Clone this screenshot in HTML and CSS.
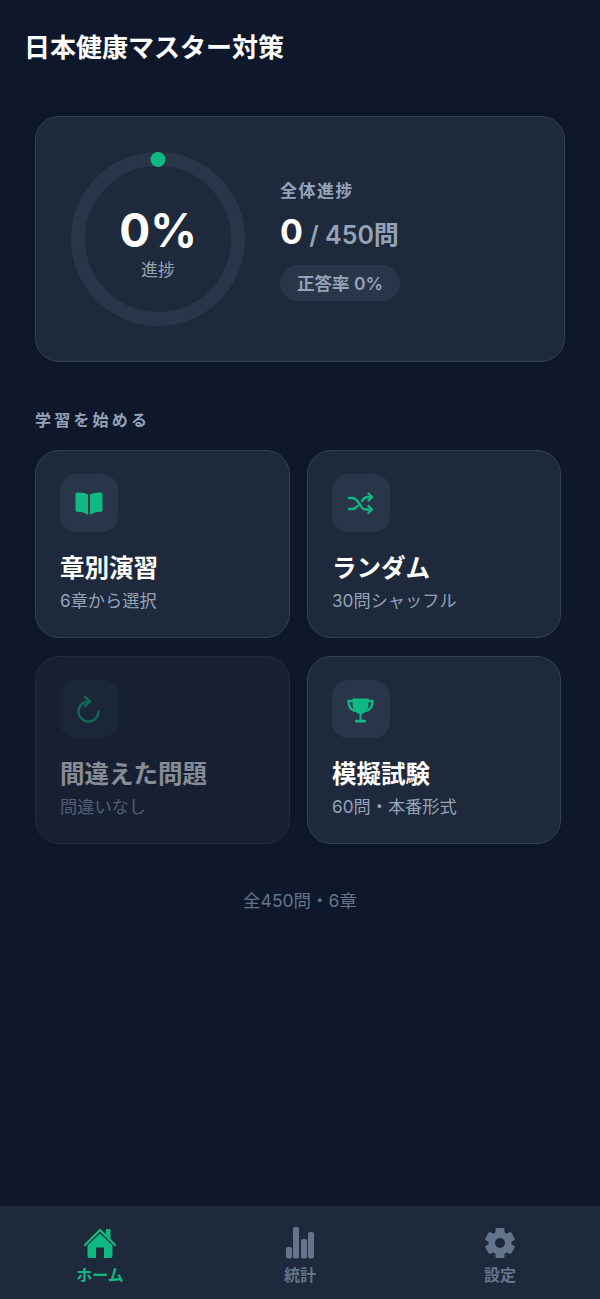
FILE: index.html
```html
<!DOCTYPE html>
<html lang="ja">
<head>
<meta charset="utf-8">
<title>日本健康マスター対策</title>
<link rel="stylesheet" href="styles.css">
</head>
<body>
<div class="app">
  <header class="header"><h1 class="app-title">日本健康マスター対策</h1></header>
  <main class="content">
    <section class="hero">
      <div class="ring">
        <svg class="ring-svg" viewBox="0 0 176 176" width="176" height="176">
          <circle class="ring-track" cx="88" cy="88" r="80"/>
          <circle class="ring-dot" cx="88" cy="8.500" r="7.500"/>
        </svg>
        <div class="ring-text">
          <div class="ring-value">0%</div>
          <div class="ring-label">進捗</div>
        </div>
      </div>
      <div class="stats">
        <div class="stats-label">全体進捗</div>
        <div class="stats-count"><span class="count-main">0</span><span class="count-sub"> / 450問</span></div>
        <div class="pill">正答率 0%</div>
      </div>
    </section>

    <h2 class="section-title">学習を始める</h2>
    <div class="grid">
      <article class="card">
        <div class="icon-box">
          <svg viewBox="0 0 32 32" width="32" height="32"><path class="fill-green" d="M15 7.600C12.500 5.900 8.600 5.200 4.200 5.500c-1 .1-1.700.8-1.700 1.800v15.600c0 1 .8 1.800 1.800 1.800 4 0 7.600 1 10.700 3.200z"/><path class="fill-green" d="M17 7.600c2.500-1.700 6.400-2.400 10.800-2.100 1 .1 1.700.8 1.700 1.800v15.600c0 1-.8 1.800-1.800 1.800-4 0-7.600 1-10.700 3.200z"/></svg>
        </div>
        <h3 class="card-title">章別演習</h3>
        <p class="card-sub">6章から選択</p>
      </article>
      <article class="card">
        <div class="icon-box">
          <svg viewBox="0 0 32 32" width="32" height="32"><path class="stroke-green" d="M4 11h3c3 0 4.500 1.500 6 4l2 3c1.500 2.500 3 4.500 6 4.500h5M4 22h3c2.500 0 4-1 5.500-3M17 14c1.500-2.500 3-4 6-4h4"/><path class="stroke-green" d="M23.500 6.500 27 10l-3.500 3.500M23.500 19l3.500 3.500-3.500 3.500"/></svg>
        </div>
        <h3 class="card-title">ランダム</h3>
        <p class="card-sub">30問シャッフル</p>
      </article>
      <article class="card card-disabled">
        <div class="icon-box">
          <svg viewBox="0 0 32 32" width="32" height="32"><path class="stroke-green" d="M16 8.500A10 10 0 1 0 25.500 18.500"/><path class="stroke-green" d="M12 4l5 4.500-5 4.500"/></svg>
        </div>
        <h3 class="card-title">間違えた問題</h3>
        <p class="card-sub">間違いなし</p>
      </article>
      <article class="card">
        <div class="icon-box">
          <svg viewBox="0 0 32 32" width="32" height="32"><path class="stroke-green" d="M8 8H3.500c0 5 2 8.500 6 10M23 8h4.500c0 5-2 8.500-6 10"/><path class="fill-green" d="M7.500 5.500h16v6c0 5-3.500 9-7 9.500v6h-2v-6c-3.500-.5-7-4.500-7-9.500z"/><rect class="fill-green" x="10" y="26.800" width="11" height="2.600" rx="1.200"/></svg>
        </div>
        <h3 class="card-title">模擬試験</h3>
        <p class="card-sub">60問・本番形式</p>
      </article>
    </div>
    <p class="summary">全450問・6章</p>
  </main>
  <nav class="tabbar">
    <div class="tab tab-active">
      <svg viewBox="0 0 36 34" width="36" height="34"><path class="fill-green" d="M18 7.500 5.500 19.500V30c0 1.100.9 2 2 2H14V21.500h8V32h6.500c1.100 0 2-.9 2-2V19.500z"/><path class="roof" d="M3 19 18 4l15 15"/><path class="fill-green" d="M24 3h4.500v10L24 8.500z"/></svg>
      <span class="tab-label">ホーム</span>
    </div>
    <div class="tab">
      <svg viewBox="0 0 36 34" width="36" height="34"><rect class="fill-grey" x="4" y="21" width="6" height="11.500" rx="2"/><rect class="fill-grey" x="11" y="1" width="6" height="31.500" rx="2"/><rect class="fill-grey" x="19" y="13" width="6" height="19.500" rx="2"/><rect class="fill-grey" x="26" y="6" width="6" height="26.500" rx="2"/></svg>
      <span class="tab-label">統計</span>
    </div>
    <div class="tab">
      <svg viewBox="0 0 36 34" width="36" height="34">
        <circle class="fill-grey" cx="18" cy="17" r="11.500"/>
        <rect class="fill-grey" x="13.500" y="2" width="9" height="30" rx="1.500"/>
        <rect class="fill-grey" x="13.500" y="2" width="9" height="30" rx="1.500" transform="rotate(60 18 17)"/>
        <rect class="fill-grey" x="13.500" y="2" width="9" height="30" rx="1.500" transform="rotate(120 18 17)"/>
        <circle class="gear-hole" cx="18" cy="17" r="5"/>
      </svg>
      <span class="tab-label">設定</span>
    </div>
  </nav>
</div>
</body>
</html>
```
FILE: styles.css
```css
* { box-sizing: border-box; }
html, body { margin: 0; padding: 0; }
body {
  background: #0f172a;
  font-family: "Inter", "Noto Sans CJK JP", sans-serif;
  color: #fff;
}
.app {
  width: 600px;
  height: 1299px;
  display: flex;
  flex-direction: column;
  overflow: hidden;
}
.header { padding: 31px 24px 0; height: 116px; }
.app-title {
  margin: 0;
  font-size: 26px;
  line-height: 34px;
  font-weight: 700;
}
.content { flex: 1; padding: 0 35px; }
.hero {
  height: 246px;
  display: flex;
  align-items: center;
  gap: 34px;
  padding: 0 34px;
  background: #1e293b;
  border: 1px solid #334155;
  border-radius: 24px;
}
.ring { position: relative; width: 176px; height: 176px; flex: none; }
.ring-svg { display: block; }
.ring-track { fill: none; stroke: #293548; stroke-width: 14; }
.ring-dot { fill: #10b981; }
.ring-text {
  position: absolute;
  inset: 0;
  padding-top: 6px;
  display: flex;
  flex-direction: column;
  align-items: center;
  justify-content: center;
}
.ring-value { font-size: 46px; line-height: 56px; font-weight: 700; }
.ring-label { font-size: 17px; line-height: 24px; color: #94a3b8; }
.stats { display: flex; flex-direction: column; align-items: flex-start; }
.stats-label {
  font-size: 17px;
  line-height: 26px;
  font-weight: 700;
  letter-spacing: 1.500px;
  color: #94a3b8;
}
.stats-count { margin-top: 4px; line-height: 48px; white-space: nowrap; }
.count-main { font-size: 34px; font-weight: 700; color: #fff; }
.count-sub { font-size: 25px; font-weight: 600; color: #94a3b8; }
.pill {
  margin-top: 3px;
  height: 36px;
  padding: 0 17px;
  display: flex;
  align-items: center;
  border-radius: 18px;
  background: #293548;
  font-size: 17.500px;
  font-weight: 600;
  color: #94a3b8;
}
.section-title {
  margin: 46px 0 18px;
  font-size: 16px;
  line-height: 24px;
  font-weight: 700;
  letter-spacing: 3.200px;
  color: #94a3b8;
}
.grid {
  display: grid;
  grid-template-columns: 255px 254px;
  grid-auto-rows: 188px;
  gap: 18px 17px;
}
.card {
  padding: 23px 24px;
  background: #1e293b;
  border: 1px solid #334155;
  border-radius: 24px;
}
.card-disabled { opacity: 0.5; }
.icon-box {
  width: 58px;
  height: 58px;
  display: flex;
  align-items: center;
  justify-content: center;
  border-radius: 16px;
  background: #293548;
}
.card-title {
  margin: 19px 0 0;
  font-size: 24.500px;
  line-height: 34px;
  font-weight: 700;
  color: #fff;
}
.card-sub {
  margin: 4px 0 0;
  font-size: 17.200px;
  line-height: 24px;
  font-weight: 400;
  color: #94a3b8;
}
.fill-green { fill: #10b981; }
.fill-grey { fill: #64748b; }
.gear-hole { fill: #1e293b; }
.stroke-green {
  fill: none;
  stroke: #10b981;
  stroke-width: 2.400;
  stroke-linecap: round;
  stroke-linejoin: round;
}
.roof {
  fill: none;
  stroke: #10b981;
  stroke-width: 2.400;
  stroke-linecap: round;
  stroke-linejoin: round;
}
.summary {
  margin: 45px 0 0;
  width: 530px;
  text-align: center;
  font-size: 17.500px;
  line-height: 24px;
  color: #64748b;
}
.tabbar {
  height: 93px;
  flex: none;
  display: grid;
  grid-template-columns: repeat(3, 1fr);
  padding-top: 20px;
  background: #1e293b;
}
.tab {
  display: flex;
  flex-direction: column;
  align-items: center;
  color: #64748b;
}
.tab-active { color: #10b981; }
.tab-label {
  margin-top: 4px;
  font-size: 16px;
  line-height: 22px;
  font-weight: 700;
}
```
